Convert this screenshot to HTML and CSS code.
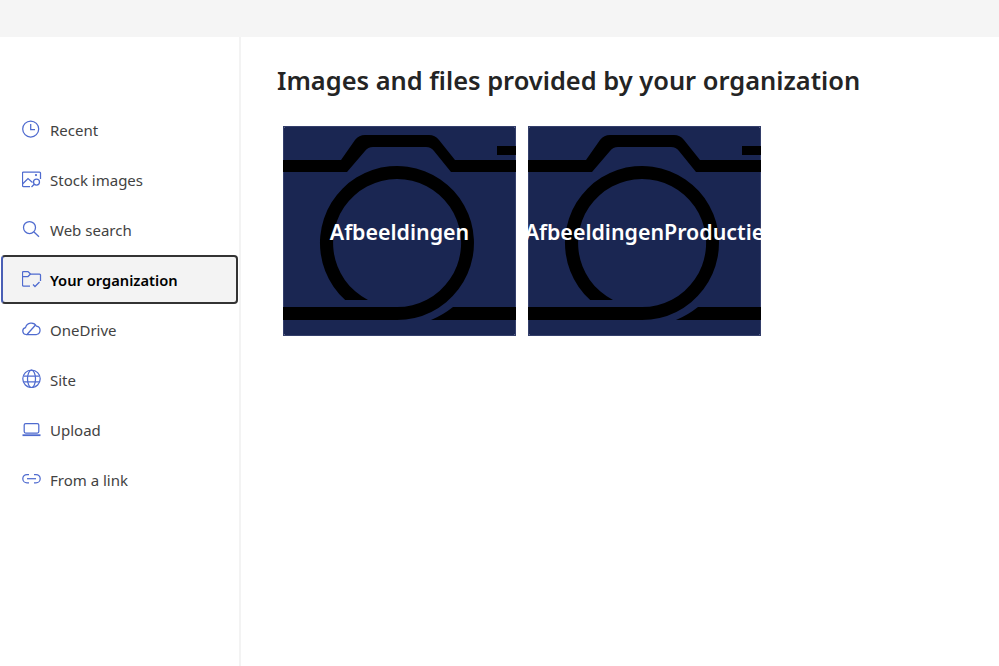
FILE: index.html
```html
<!DOCTYPE html>
<html lang="en">
<head>
    <meta charset="UTF-8">
    <title>Images and files provided by your organization</title>
    <link rel="stylesheet" href="styles.css">
</head>
<body>
    <svg class="defs" width="0" height="0" aria-hidden="true">
        <symbol id="camera" viewBox="0 0 233 210">
            <path d="M0 34H58L72 14Q76 9 82 9H146Q152 9 156 14L172 34H234V46H168L151 25Q148 21 143 21H90Q85 21 82 25L64 46H0Z"/>
            <rect x="214" y="20" width="20" height="9"/>
            <path d="M114 194A77 77 0 1 0 62.2 174H85A64 64 0 1 1 114 181H0V194Z"/>
            <path d="M148 194Q160 189 170 181H234V194Z"/>
        </symbol>
    </svg>

    <div class="topbar"></div>

    <div class="page">
        <nav class="sidebar">
            <a class="nav-item" href="#">
                <svg class="icon" viewBox="0 0 20 20"><circle cx="8.700" cy="11" r="8"/><path d="M8.700 6V11.500H13"/></svg>
                <span>Recent</span>
            </a>
            <a class="nav-item" href="#">
                <svg class="icon" viewBox="0 0 20 20"><path d="M8 18.500H1.500A1 1 0 0 1 0.500 17.500V5A1 1 0 0 1 1.500 4H17.500A1 1 0 0 1 18.500 5V11"/><path d="M0.500 16L6 10.500L10.500 14.500"/><circle cx="14.500" cy="14" r="3"/><path d="M12.300 16.200L9.500 19"/><circle cx="14" cy="7" r="0.500"/></svg>
                <span>Stock images</span>
            </a>
            <a class="nav-item" href="#">
                <svg class="icon" viewBox="0 0 20 20"><circle cx="7.500" cy="9.500" r="6"/><path d="M12 14L17 18.800"/></svg>
                <span>Web search</span>
            </a>
            <a class="nav-item selected" href="#">
                <svg class="icon" viewBox="0 0 20 20"><path d="M8 18H1.500A1 1 0 0 1 0.500 17V4.500A1 1 0 0 1 1.500 3.500H6L8.500 6H17.500A1 1 0 0 1 18.500 7V13"/><path d="M0.500 8.500H6L8.500 6"/><path d="M11 16.500L13 18.500L17.500 14"/></svg>
                <span>Your organization</span>
            </a>
            <a class="nav-item" href="#">
                <svg class="icon" viewBox="0 0 20 20"><path d="M4 16.500A3.500 3.500 0 0 1 3.500 9.600A6 6 0 0 1 14.500 8.200A4.200 4.200 0 0 1 14.500 16.500Z"/><path d="M5 16.500L13.500 7"/></svg>
                <span>OneDrive</span>
            </a>
            <a class="nav-item" href="#">
                <svg class="icon" viewBox="0 0 20 20"><circle cx="9.500" cy="10.800" r="8.700"/><ellipse cx="9.500" cy="10.800" rx="4" ry="8.700"/><path d="M1.500 8H17.500M1.500 13.800H17.500"/></svg>
                <span>Site</span>
            </a>
            <a class="nav-item" href="#">
                <svg class="icon" viewBox="0 0 20 20"><rect x="2.200" y="5.500" width="14.600" height="9.500" rx="1.500"/><path class="thick" d="M0.500 17.200H18.500"/></svg>
                <span>Upload</span>
            </a>
            <a class="nav-item" href="#">
                <svg class="icon" viewBox="0 0 20 20"><path d="M7 6.500H5A4.200 4.200 0 0 0 5 14.900H7M12 6.500H14A4.200 4.200 0 0 1 14 14.900H12"/><path d="M5 10.700H14"/></svg>
                <span>From a link</span>
            </a>
        </nav>

        <main class="content">
            <h1 class="heading">Images and files provided by your organization</h1>
            <div class="tiles">
                <button class="tile">
                    <svg class="tile-art"><use href="#camera"/></svg>
                    <span class="tile-name">Afbeeldingen</span>
                </button>
                <button class="tile">
                    <svg class="tile-art"><use href="#camera"/></svg>
                    <span class="tile-name">AfbeeldingenProductie</span>
                </button>
            </div>
        </main>
    </div>
</body>
</html>
```

FILE: styles.css
```css
:root {
    --text: #242424;
    --muted: #424242;
    --accent: #4f6bcf;
    --tile: #1a2652;
    --tile-corner: #59618a;
}

* {
    box-sizing: border-box;
}

html, body {
    height: 100%;
}

body {
    margin: 0;
    display: flex;
    flex-direction: column;
    overflow: hidden;
    background: white;
    color: var(--text);
    font-family: "Noto Sans", "Open Sans", sans-serif;
}

.defs {
    position: absolute;
}

.topbar {
    height: 37px;
    flex: none;
    background: #f5f5f5;
}

.page {
    flex: 1;
    display: flex;
}

.sidebar {
    width: 241px;
    flex: none;
    padding: 68px 1px 0 1px;
    border-right: 2px solid #f3f3f3;
}

.nav-item {
    height: 50px;
    width: 237px;
    display: flex;
    align-items: center;
    gap: 8px;
    padding-left: 21px;
    color: var(--muted);
    font-size: 15px;
    text-decoration: none;
    border-radius: 4px;
}

.nav-item.selected {
    height: 49px;
    margin-bottom: 1px;
    padding-left: 19px;
    background: #f3f3f3;
    color: black;
    font-size: 14.700px;
    font-weight: 600;
    border: 2px solid #333;
    border-left-color: #4a5fb5;
}

.icon {
    width: 20px;
    height: 20px;
    flex: none;
    margin-top: -4px;
    fill: none;
    stroke: var(--accent);
    stroke-width: 1.250;
}

.icon .thick {
    stroke-width: 1.800;
}

.content {
    flex: 1;
    padding: 25px 0 0 36px;
}

.heading {
    margin: 0 0 27px 0;
    font-size: 25.450px;
    line-height: 37px;
    font-weight: 600;
}

.tiles {
    display: flex;
    gap: 12px;
    padding-left: 6px;
}

.tile {
    position: relative;
    width: 233px;
    height: 210px;
    padding: 0;
    display: flex;
    align-items: center;
    justify-content: center;
    overflow: hidden;
    background:
        linear-gradient(var(--tile-corner), var(--tile-corner)) 0 0 / 2px 2px no-repeat,
        linear-gradient(var(--tile-corner), var(--tile-corner)) 100% 0 / 2px 2px no-repeat,
        linear-gradient(var(--tile-corner), var(--tile-corner)) 0 100% / 2px 2px no-repeat,
        linear-gradient(var(--tile-corner), var(--tile-corner)) 100% 100% / 2px 2px no-repeat,
        var(--tile);
    border: none;
    box-shadow: inset 0 0 0 1px #333e6a;
    color: white;
    font-family: inherit;
}

.tile-art {
    position: absolute;
    inset: 0;
    width: 100%;
    height: 100%;
    fill: black;
}

.tile-name {
    position: relative;
    top: 2px;
    margin-bottom: 4px;
    white-space: nowrap;
    font-size: 21.400px;
    font-weight: 600;
}
```
